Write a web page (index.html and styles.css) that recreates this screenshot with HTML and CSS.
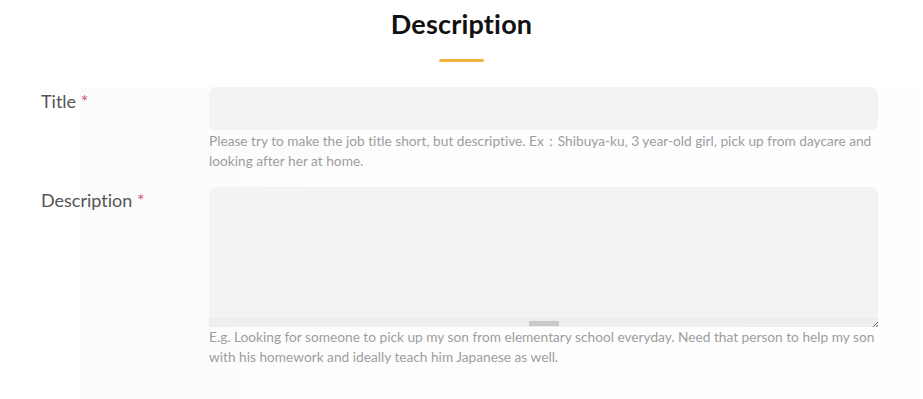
FILE: index.html
```html
<!DOCTYPE html>
<html>
<head>
<meta charset="utf-8">
<link rel="stylesheet" href="styles.css">
</head>
<body>
<div class="page">
  <header class="head">
    <h2 class="heading">Description</h2>
    <div class="bar"></div>
  </header>
  <div class="panel">
    <div class="row row-title">
      <label class="label">Title <span class="req">*</span></label>
      <div class="field">
        <div class="input"></div>
        <p class="help">Please try to make the job title short, but descriptive. Ex：Shibuya-ku, 3 year-old girl, pick up from daycare and looking after her at home.</p>
      </div>
    </div>
    <div class="row row-desc">
      <label class="label">Description <span class="req">*</span></label>
      <div class="field">
        <div class="textarea">
          <div class="scroll"><div class="thumb"></div></div>
          <svg class="grip" width="6" height="6" viewBox="0 0 6 6"><path d="M6 1 L1 6 M6 4 L4 6" stroke="#666" stroke-width="1"/></svg>
        </div>
        <p class="help help-desc">E.g. Looking for someone to pick up my son from elementary school everyday. Need that person to help my son with his homework and ideally teach him Japanese as well.</p>
      </div>
    </div>
  </div>
</div>
</body>
</html>
```
FILE: styles.css
```css
html, body {
  margin: 0;
  padding: 0;
  background: #ffffff;
}
body {
  font-family: Lato, "Open Sans", sans-serif;
  font-variant-ligatures: none;
  width: 923px;
  height: 399px;
  overflow: hidden;
}
.page {
  display: flex;
  flex-direction: column;
}
.head {
  display: flex;
  flex-direction: column;
  align-items: center;
  padding-top: 6px;
}
.heading {
  margin: 0;
  font-size: 27px;
  line-height: 36px;
  font-weight: 700;
  color: #111;
  letter-spacing: 0.2px;
}
.bar {
  width: 45px;
  height: 3px;
  border-radius: 2px;
  background: #f0b440;
  margin-top: 17px;
}
.panel {
  margin-left: 80px;
  margin-right: 3px;
  margin-top: 25px;
  background: linear-gradient(to right, #fbfbfb, #fdfdfd 30%, #fefefe);
  padding-bottom: 40px;
}
.row {
  display: flex;
  margin-left: -39px;
}
.label {
  width: 168px;
  flex: none;
  font-size: 18px;
  color: #555;
  line-height: 24px;
  padding-top: 2px;
}
.req {
  color: #d0508a;
}
.field {
  width: 669px;
  flex: none;
}
.input {
  height: 43px;
  border-radius: 7px;
  background: #f4f2f3;
}
.help {
  margin: 1px 0 0 0;
  font-size: 13.7px;
  line-height: 19.5px;
  color: #9d9d9d;
}
.help-desc {
  margin-top: 0;
}
.row-desc {
  margin-top: 17px;
}
.row-desc .label {
  padding-top: 1px;
}
.textarea {
  height: 140px;
  border-radius: 7px 7px 2px 2px;
  background: #f4f2f3;
  display: flex;
  flex-direction: column;
  justify-content: flex-end;
  position: relative;
}
.scroll {
  height: 8px;
  background: #efeded;
  border-top: 1px solid #ebe9ea;
  display: flex;
  justify-content: center;
  align-items: center;
}
.thumb {
  width: 30px;
  height: 5px;
  background: #c9c9c9;
}
.grip {
  position: absolute;
  right: 0;
  bottom: 0;
}
```
